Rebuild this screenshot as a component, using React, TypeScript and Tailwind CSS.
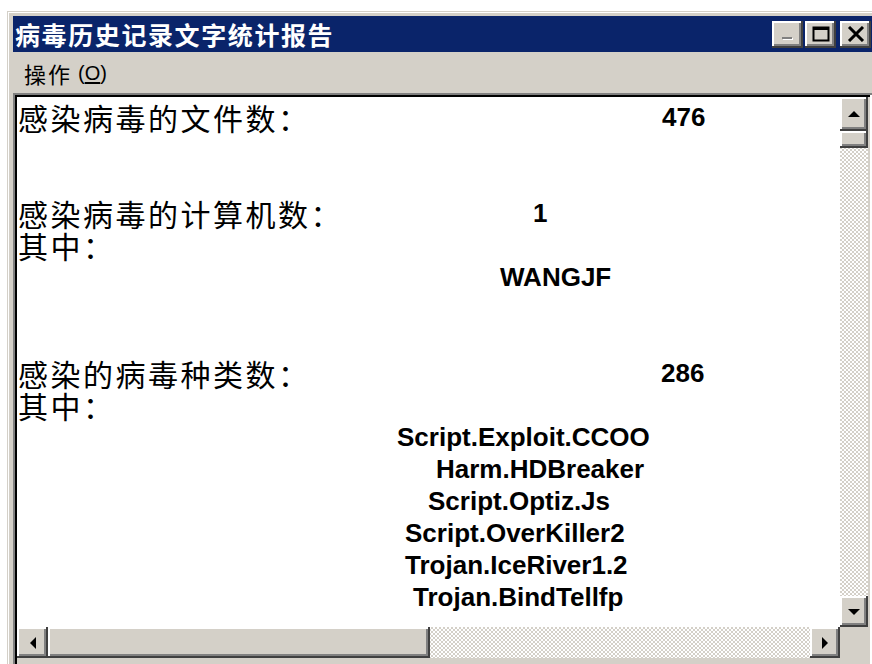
import React from "react"

const raised = "bg-[#d4d0c8] shadow-[inset_-2px_-2px_#404040,inset_2px_2px_#ffffff,inset_-4px_-4px_#808080]"
const dither = "bg-[repeating-conic-gradient(#d4d0c8_0_25%,#ffffff_0_50%)] bg-[length:4px_4px]"
const cjk = "font-['Noto_Sans_CJK_SC','Noto_Sans',sans-serif]"
const latin = "font-['Liberation_Sans',Arial,sans-serif]"

type Line = { label?: string; value?: string; indent?: string }

const lines: Line[] = [
  { label: "感染病毒的文件数：", value: "476", indent: "w-[644px]" },
  {},
  {},
  { label: "感染病毒的计算机数：", value: "1", indent: "w-[515px]" },
  { label: "其中：" },
  { value: "WANGJF", indent: "w-[482px]" },
  {},
  {},
  { label: "感染的病毒种类数：", value: "286", indent: "w-[643px]" },
  { label: "其中：" },
  { value: "Script.Exploit.CCOO", indent: "w-[379px]" },
  { value: "Harm.HDBreaker", indent: "w-[418px]" },
  { value: "Script.Optiz.Js", indent: "w-[410px]" },
  { value: "Script.OverKiller2", indent: "w-[387px]" },
  { value: "Trojan.IceRiver1.2", indent: "w-[387px]" },
  { value: "Trojan.BindTellfp", indent: "w-[395px]" },
]

function Arrow({ dir }: { dir: "up" | "down" | "left" | "right" }) {
  const pts = {
    up: "1,7 7,1 13,7",
    down: "1,1 7,7 13,1",
    left: "7,1 1,7 7,13",
    right: "1,1 7,7 1,13",
  }[dir]
  const vertical = dir === "up" || dir === "down"
  return (
    <svg width={vertical ? 14 : 8} height={vertical ? 8 : 14} viewBox={vertical ? "0 0 14 8" : "0 0 8 14"}>
      <polygon points={pts} fill="#000" />
    </svg>
  )
}

function TitleButton({ kind }: { kind: "min" | "max" | "close" }) {
  return (
    <div className={`w-[31px] h-[27px] flex items-center justify-center ${raised}`}>
      {kind === "min" && (
        <svg width="18" height="16" viewBox="0 0 18 16">
          <rect x="4" y="12" width="10" height="2" fill="#ffffff" />
          <rect x="3" y="11" width="10" height="2" fill="#808080" />
        </svg>
      )}
      {kind === "max" && (
        <svg width="18" height="16" viewBox="0 0 18 16">
          <rect x="1.5" y="1.5" width="15" height="13" fill="none" stroke="#000" strokeWidth="2" />
          <rect x="1" y="1" width="16" height="3" fill="#000" />
        </svg>
      )}
      {kind === "close" && (
        <svg width="18" height="16" viewBox="0 0 18 16">
          <path d="M2 1 L16 15 M16 1 L2 15" stroke="#000" strokeWidth="3" />
        </svg>
      )}
    </div>
  )
}

export default function App() {
  return (
    <div className="w-[872px] h-[664px] overflow-hidden bg-white pl-[7px] pt-[11px]">
      <div className="w-[872px] h-[660px] bg-[#d4d0c8] border-t border-l border-[#d4d0c8]">
        <div className="h-full border-t border-l border-white pl-[4px] pt-[3px] flex flex-col">
          {/* title bar */}
          <div className="h-[36px] bg-[#0a246a] flex items-center justify-between pl-[2px] pr-[8px]">
            <span className={`${cjk} text-white font-bold text-[25px] tracking-[1.6px] leading-none`}>
              病毒历史记录文字统计报告
            </span>
            <div className="flex items-center">
              <TitleButton kind="min" />
              <div className="w-[2px]" />
              <TitleButton kind="max" />
              <div className="w-[4px]" />
              <TitleButton kind="close" />
            </div>
          </div>

          {/* menu */}
          <div className="h-[41px] flex items-center pl-[11px] text-black">
            <span className={`${cjk} text-[22px] tracking-[2px] leading-none`}>操作</span>
            <span className={`${latin} text-[20px] leading-none ml-[6px]`}>
              (<span className="underline underline-offset-2">O</span>)
            </span>
          </div>

          {/* sunken client area */}
          <div className="w-[859px] flex-1 p-[4px] shadow-[inset_2px_2px_#808080,inset_-2px_-2px_#ffffff,inset_4px_4px_#000000,inset_-4px_-4px_#d4d0c8]">
            <div className="h-[561px] flex flex-col">
              <div className="flex h-[530px]">
                <div className="flex-1 bg-white pt-[4px] pl-[1px] text-black overflow-hidden">
                  {lines.map((l, i) => (
                    <div key={i} className="h-[32px] flex items-center whitespace-nowrap">
                      {l.label !== undefined && l.value === undefined && (
                        <span className={`${cjk} text-[30px] tracking-[2.5px] leading-[32px]`}>{l.label}</span>
                      )}
                      {l.value !== undefined && (
                        <>
                          <span className={`${cjk} text-[30px] tracking-[2.5px] leading-[32px] shrink-0 ${l.indent}`}>{l.label}</span>
                          <span className={`${latin} font-bold text-[26px] leading-none`}>{l.value}</span>
                        </>
                      )}
                    </div>
                  ))}
                </div>
                <div className={`w-[28px] flex flex-col ${dither}`}>
                  <div className={`h-[34px] flex items-center justify-center ${raised}`}>
                    <Arrow dir="up" />
                  </div>
                  <div className={`h-[17px] ${raised}`} />
                  <div className="flex-1" />
                  <div className={`h-[31px] flex items-center justify-center ${raised}`}>
                    <Arrow dir="down" />
                  </div>
                </div>
              </div>
              <div className="flex h-[31px]">
                <div className={`flex-1 flex ${dither}`}>
                  <div className={`w-[31px] flex items-center justify-center ${raised}`}>
                    <Arrow dir="left" />
                  </div>
                  <div className={`w-[382px] ${raised}`} />
                  <div className="flex-1" />
                  <div className={`w-[30px] flex items-center justify-center ${raised}`}>
                    <Arrow dir="right" />
                  </div>
                </div>
                <div className="w-[28px] bg-[#d4d0c8]" />
              </div>
            </div>
          </div>
        </div>
      </div>
    </div>
  )
}
